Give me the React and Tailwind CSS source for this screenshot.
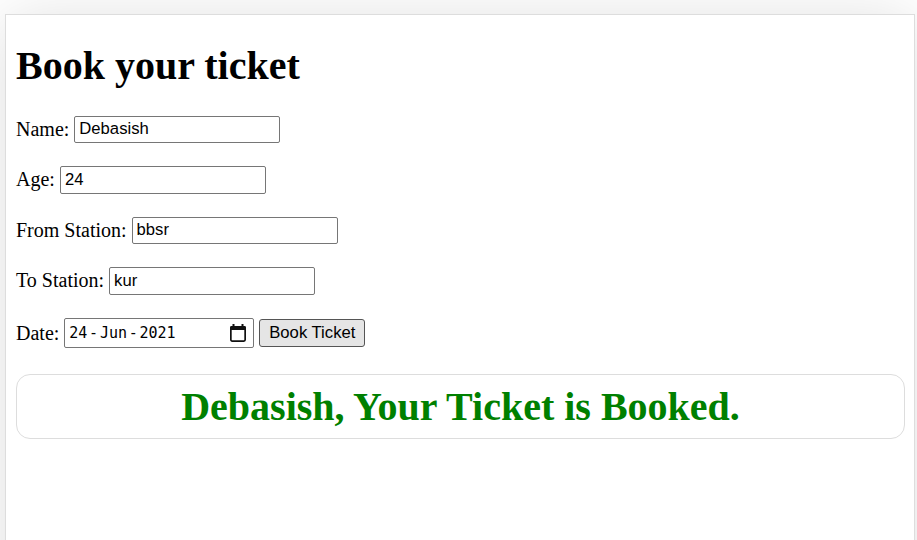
const dateGroups = ["24", "-", "Jun", "-", "2021"];

const boxClass =
  "box-border w-[206px] rounded-[2px] border border-[#767676] bg-white px-[4px] font-['Liberation_Sans',Arial,sans-serif] text-[16.67px] leading-[22px] text-black outline-none";

function Field({ label, value, short }) {
  return (
    <label className="flex h-[28px] items-start gap-[5px] whitespace-nowrap">
      <span className="leading-[26px]">{label}</span>
      <input
        className={short ? boxClass + " h-[27px] pb-[2px]" : boxClass + " h-[28px] pb-[1px]"}
        defaultValue={value}
      />
    </label>
  );
}

function DateField() {
  return (
    <div className="flex h-[30px] w-[190px] items-center justify-between rounded-[2px] border border-[#767676] bg-white pr-[7px] pl-[4px]">
      <span className="flex font-['DejaVu_Sans_Mono',monospace] text-[15px] leading-[26px]">
        {dateGroups.map((group, i) => (
          <span key={i} className={group === "-" ? "flex w-[12.5px] justify-center" : "flex"}>
            {group}
          </span>
        ))}
      </span>
      <svg className="mb-[1px]" width="16" height="18" viewBox="0 0 16 18" fill="none" aria-hidden="true">
        <rect x="0.85" y="2.85" width="14.3" height="14.3" rx="1.3" stroke="#111" strokeWidth="1.7" />
        <path d="M0 6V3.5Q0 2 1.5 2H14.5Q16 2 16 3.5V6Z" fill="#111" />
        <path d="M3.5 0V3M12.5 0V3" stroke="#111" strokeWidth="2" />
      </svg>
    </div>
  );
}

export default function App() {
  return (
    <div className="h-[540px] overflow-hidden bg-white pt-[14px] pr-[2px] pl-[5px] font-['Liberation_Serif','Times_New_Roman',serif] text-[20px] text-black">
      <main className="h-[640px] border border-[#dddddd] bg-white pr-[9px] pl-[10px] shadow-[0_5px_60px_rgba(0,0,0,0.13)]">
        <h1 className="mt-[28px] h-[46px] text-[40px] leading-[46px] font-bold">Book your ticket</h1>
        <form className="mt-[27px]" onSubmit={(e) => e.preventDefault()}>
          <div className="flex flex-col">
            <Field label="Name:" value="Debasish" short />
            <div className="mt-[22px]">
              <Field label="Age:" value="24" />
            </div>
            <div className="mt-[23px]">
              <Field label="From Station:" value="bbsr" short />
            </div>
            <div className="mt-[22px]">
              <Field label="To Station:" value="kur" />
            </div>
          </div>
          <div className="mt-[23px] flex h-[30px] items-center gap-[5px]">
            <span>Date:</span>
            <DateField />
            <button className="h-[28px] w-[106px] rounded-[3px] border border-[#555555] bg-[#e5e5e5] pb-[1px] font-['Liberation_Sans',Arial,sans-serif] text-[16.67px] leading-[24px] whitespace-nowrap">
              Book Ticket
            </button>
          </div>
        </form>
        <div className="mt-[26px] h-[65px] rounded-[14px] border border-[#dddddd] text-center text-[40px] leading-[63px] font-bold text-[#008000]">
          Debasish, Your Ticket is Booked.
        </div>
      </main>
    </div>
  );
}
